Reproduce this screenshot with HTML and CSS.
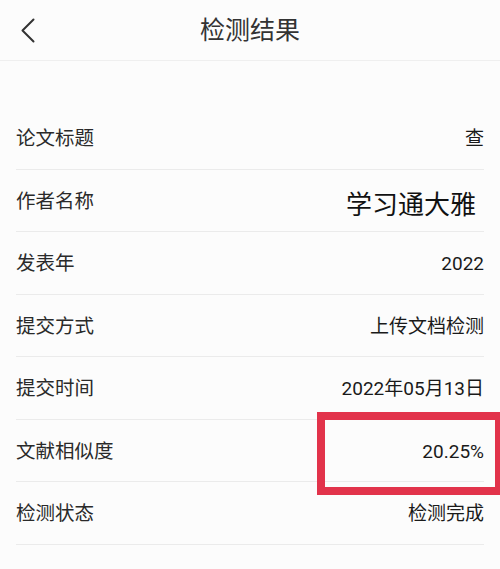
FILE: index.html
```html
<!DOCTYPE html>
<html lang="zh-CN">
<head>
<meta charset="utf-8">
<title>检测结果</title>
<link rel="stylesheet" href="styles.css">
</head>
<body>
<header class="topbar">
  <div class="back">
    <svg width="14" height="26" viewBox="0 0 14 26"><path d="M12.5 1.5 L1.5 12.5 L12.5 23.5" fill="none" stroke="#333" stroke-width="2" stroke-linecap="round" stroke-linejoin="round"/></svg>
  </div>
  <h1 class="title">检测结果</h1>
  <div></div>
</header>
<main class="list">
  <div class="row"><span class="label">论文标题</span><span class="value">查</span></div>
  <div class="row"><span class="label">作者名称</span><span class="value big">学习通大雅</span></div>
  <div class="row"><span class="label">发表年</span><span class="value">2022</span></div>
  <div class="row"><span class="label">提交方式</span><span class="value">上传文档检测</span></div>
  <div class="row"><span class="label">提交时间</span><span class="value">2022年05月13日</span></div>
  <div class="row highlight"><span class="label">文献相似度</span><span class="value">20.25%</span><span class="mark"></span></div>
  <div class="row"><span class="label">检测状态</span><span class="value">检测完成</span></div>
</main>
</body>
</html>
```

FILE: styles.css
```css
html, body {
  margin: 0;
  padding: 0;
}
body {
  background: #fcfcfc;
  font-family: Roboto, "Noto Sans CJK SC", sans-serif;
  color: #222;
  overflow: hidden;
  width: 500px;
  height: 569px;
}
.topbar {
  display: grid;
  grid-template-columns: 60px 1fr 60px;
  align-items: center;
  height: 60px;
  border-bottom: 1px solid #efefef;
}
.back {
  display: flex;
  align-items: center;
  padding-left: 21px;
  padding-top: 1px;
}
.title {
  margin: 0;
  text-align: center;
  font-size: 25px;
  font-weight: 400;
  color: #333;
  line-height: 1;
  padding-top: 1px;
}
.list {
  margin: 0 16px;
  padding-top: 46px;
}
.row {
  position: relative;
  display: flex;
  align-items: center;
  justify-content: space-between;
  box-sizing: border-box;
  height: 62.5px;
  padding-top: 3px;
  border-bottom: 1px solid #ebebeb;
}
.label {
  font-size: 19.5px;
  line-height: 28px;
  color: #2a2a2a;
}
.value {
  font-size: 19px;
  line-height: 28px;
  color: #1a1a1a;
}
.value.big {
  font-size: 26px;
  line-height: 36px;
  padding-top: 6px;
  padding-right: 8px;
  color: #111;
}
.mark {
  position: absolute;
  top: -8px;
  left: 301px;
  right: -19px;
  bottom: -14px;
  border: 8.5px solid #e2334b;
}
```
